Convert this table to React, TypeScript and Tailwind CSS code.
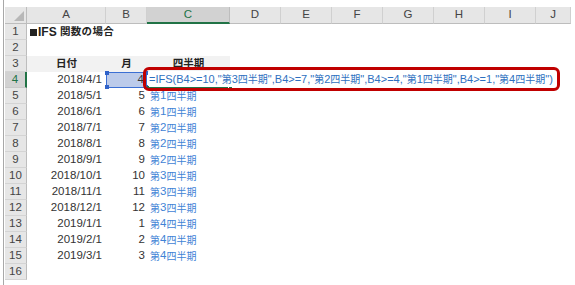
const font = { fontFamily: '"Liberation Sans", "Noto Sans CJK JP", sans-serif' };

const colLetters = ["A", "B", "C", "D", "E", "F", "G", "H", "I", "J"];
const colWidths = [
  "w-[79px]",
  "w-[41px]",
  "w-[83px]",
  "w-[51px]",
  "w-[51px]",
  "w-[51px]",
  "w-[51px]",
  "w-[51px]",
  "w-[51px]",
  "w-[35px]",
];

const data: [string, number, string][] = [
  ["2018/4/1", 4, ""],
  ["2018/5/1", 5, "第1四半期"],
  ["2018/6/1", 6, "第1四半期"],
  ["2018/7/1", 7, "第2四半期"],
  ["2018/8/1", 8, "第2四半期"],
  ["2018/9/1", 9, "第2四半期"],
  ["2018/10/1", 10, "第3四半期"],
  ["2018/11/1", 11, "第3四半期"],
  ["2018/12/1", 12, "第3四半期"],
  ["2019/1/1", 1, "第4四半期"],
  ["2019/2/1", 2, "第4四半期"],
  ["2019/3/1", 3, "第4四半期"],
];

const formula =
  '=IFS(B4>=10,"第3四半期",B4>=7,"第2四半期",B4>=4,"第1四半期",B4>=1,"第4四半期")';

// kana/kanji run a little narrower than the latin text
const cjk = /([\u3000-\u9fff]+)/;
function Txt({ s }: { s: string }) {
  return (
    <>
      {s.split(cjk).map((p, i) =>
        i % 2 === 1 ? (
          <span key={i} className="text-[10px]">
            {p}
          </span>
        ) : (
          p
        )
      )}
    </>
  );
}

function RowHeader({ n, active }: { n: number; active?: boolean }) {
  return (
    <div
      className={
        active
          ? "w-[22px] shrink-0 h-full flex items-center justify-center bg-[#d2d2d2] text-[#217346] border-r-2 border-[#217346] border-b border-b-[#c8c8c8]"
          : "w-[22px] shrink-0 h-full flex items-center justify-center bg-[#e6e6e6] text-[#444] border-r border-[#bdbdbd] border-b border-b-[#d4d4d4]"
      }
    >
      {n}
    </div>
  );
}

function Handle({ pos }: { pos: string }) {
  return <span className={`absolute w-[4px] h-[4px] bg-[#2f62c9] ${pos}`} />;
}

export default function App() {
  return (
    <div
      className="w-[575px] h-[285px] bg-white overflow-hidden text-[11.5px] text-[#333]"
      style={font}
    >
      <div className="relative ml-[3px] h-full border-l border-[#a8a8a8] pt-[7px] pl-px">
        {/* column headers */}
        <div className="flex h-[17px]">
          <div className="relative w-[22px] shrink-0 bg-[#e6e6e6] border-r border-b border-[#bdbdbd]">
            <svg className="absolute right-[2px] bottom-[2px]" width="10" height="10" viewBox="0 0 10 10">
              <polygon points="10,0 10,10 0,10" fill="#b8b8b8" />
            </svg>
          </div>
          {colLetters.map((c, i) =>
            c === "C" ? (
              <div
                key={c}
                className={`${colWidths[i]} shrink-0 flex items-center justify-center bg-[#d2d2d2] text-[#217346] border-r border-[#bdbdbd] border-b-2 border-b-[#217346]`}
              >
                {c}
              </div>
            ) : (
              <div
                key={c}
                className={`${colWidths[i]} shrink-0 flex items-center justify-center bg-[#e6e6e6] text-[#444] border-r border-[#d0d0d0] border-b border-b-[#bdbdbd]`}
              >
                {c}
              </div>
            )
          )}
        </div>

        {/* row 1: title */}
        <div className="flex h-[16px]">
          <RowHeader n={1} />
          <div className="pl-[3px] flex items-center font-bold whitespace-nowrap text-[12px] text-[#222]">
            <span className="inline-block w-[7px] h-[7px] bg-[#222] mr-[1px]" />
            IFS&nbsp;<span className="text-[10.5px] tracking-[0.3px]">関数の場合</span>
          </div>
        </div>

        {/* row 2 */}
        <div className="flex h-[16px]">
          <RowHeader n={2} />
        </div>

        {/* row 3: headings */}
        <div className="flex h-[16px]">
          <RowHeader n={3} />
          <div className="flex bg-[#f2f2f2] font-bold text-[#222] text-[10.5px]">
            <div className="w-[79px] flex items-center justify-center">日付</div>
            <div className="w-[41px] flex items-center justify-center">月</div>
            <div className="w-[83px] flex items-center justify-center">四半期</div>
          </div>
        </div>

        {/* rows 4-15 */}
        {data.map(([date, month, q], i) => {
          const n = i + 4;
          const editing = n === 4;
          return (
            <div key={n} className="flex h-[16px]">
              <RowHeader n={n} active={editing} />
              <div className="w-[79px] shrink-0 flex items-center justify-end pr-[4px]">{date}</div>
              {editing ? (
                <div className="relative w-[41px] shrink-0 flex items-center justify-end pr-[2px] bg-[#bccbea] border border-[#3b6fd3]">
                  {month}
                  <Handle pos="-left-[2px] -top-[2px]" />
                  <Handle pos="-right-[2px] -top-[2px]" />
                  <Handle pos="-left-[2px] -bottom-[2px]" />
                  <Handle pos="-right-[2px] -bottom-[2px]" />
                </div>
              ) : (
                <div className="w-[41px] shrink-0 flex items-center justify-end pr-[2px]">{month}</div>
              )}
              {editing ? (
                <div className="relative w-[83px] shrink-0 flex items-center pl-[2px] border-b-2 border-[#217346] whitespace-nowrap text-[11px] text-[#2e70c0]">
                  <span className="relative z-10 bg-white pr-[1px]">
                    <Txt s={formula} />
                  </span>
                  <span className="relative z-10 -ml-px w-px h-[13px] bg-[#777]" />
                  <span className="absolute -right-[3px] -bottom-[3px] w-[5px] h-[5px] bg-[#217346] border border-white" />
                </div>
              ) : (
                <div className="w-[83px] shrink-0 flex items-center pl-[3px] whitespace-nowrap text-[#3f83d6]">
                  <Txt s={q} />
                </div>
              )}
            </div>
          );
        })}

        {/* row 16 */}
        <div className="flex h-[16px]">
          <RowHeader n={16} />
        </div>

        {/* highlight around the formula */}
        <div className="absolute left-[139px] top-[67px] w-[417px] h-[24px] border-[3px] border-[#c00000] rounded-[6px] z-20 pointer-events-none" />
      </div>
    </div>
  );
}
